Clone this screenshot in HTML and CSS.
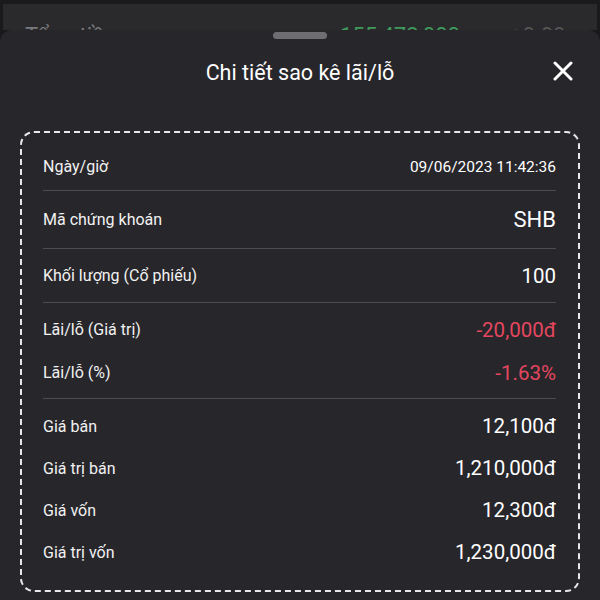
FILE: index.html
```html
<!DOCTYPE html>
<html>

<head>
    <meta charset="UTF-8">
    <meta name="viewport" content="width=device-width">
    <title>Chi tiết sao kê lãi/lỗ</title>
    <link rel="stylesheet" href="styles.css">
</head>

<body>
    <div class="backdrop">
        <div class="backdrop-row">
            <span class="bd-label">Tổng tiền</span>
            <span class="bd-value">155,472,000</span>
            <span class="bd-extra">+0.00</span>
        </div>
    </div>

    <section class="sheet">
        <div class="handle"></div>
        <header class="sheet-head">
            <h1>Chi tiết sao kê lãi/lỗ</h1>
            <button class="close" aria-label="Đóng">
                <svg width="20" height="20" viewBox="0 0 20 20">
                    <path d="M2 2L18 18M18 2L2 18" stroke="#fff" stroke-width="3" stroke-linecap="round" />
                </svg>
            </button>
        </header>

        <div class="card">
            <div class="group first">
                <div class="row">
                    <span class="label">Ngày/giờ</span>
                    <span class="value small">09/06/2023 11:42:36</span>
                </div>
            </div>
            <div class="group second">
                <div class="row">
                    <span class="label">Mã chứng khoán</span>
                    <span class="value big">SHB</span>
                </div>
            </div>
            <div class="group third">
                <div class="row">
                    <span class="label">Khối lượng (Cổ phiếu)</span>
                    <span class="value">100</span>
                </div>
            </div>
            <div class="group pnl">
                <div class="row">
                    <span class="label">Lãi/lỗ (Giá trị)</span>
                    <span class="value down">-20,000đ</span>
                </div>
                <div class="row">
                    <span class="label">Lãi/lỗ (%)</span>
                    <span class="value down">-1.63%</span>
                </div>
            </div>
            <div class="group prices">
                <div class="row">
                    <span class="label">Giá bán</span>
                    <span class="value">12,100đ</span>
                </div>
                <div class="row">
                    <span class="label">Giá trị bán</span>
                    <span class="value">1,210,000đ</span>
                </div>
                <div class="row">
                    <span class="label">Giá vốn</span>
                    <span class="value">12,300đ</span>
                </div>
                <div class="row">
                    <span class="label">Giá trị vốn</span>
                    <span class="value">1,230,000đ</span>
                </div>
            </div>
        </div>
    </section>
</body>

</html>
```

FILE: styles.css
```css
* {
    box-sizing: border-box;
}

body {
    margin: 0;
    height: 600px;
    overflow: hidden;
    background: #1a1a1c;
    font-family: Roboto, "Noto Sans", sans-serif;
    color: #fff;
}

/*********************/
/* L'écran derrière */
/*********************/
.backdrop {
    height: 30px;
    padding: 4px 3px 0 3px;
    overflow: hidden;
}

.backdrop-row {
    display: flex;
    align-items: flex-start;
    height: 26px;
    padding: 21px 0 0 22px;
    background: #2a2a2d;
    font-size: 22px;
    line-height: 1;
    color: #7a7a7e;
    overflow: hidden;
}

.bd-label {
    width: 315px;
}

.bd-value {
    color: #3f9a5c;
    width: 170px;
}

.bd-extra {
    color: #555;
}

/*********************/
/* La feuille */
/*********************/
.sheet {
    background: #27262b;
    height: 570px;
    border-radius: 12px 12px 0 0;
    padding-top: 2px;
}

.handle {
    width: 54px;
    height: 7px;
    margin: 0 auto;
    border-radius: 4px;
    background: #6e6e72;
}

.sheet-head {
    display: flex;
    align-items: center;
    justify-content: center;
    position: relative;
    height: 67px;
}

.sheet-head h1 {
    margin: 0;
    font-size: 21.5px;
    font-weight: 400;
}

.close {
    position: absolute;
    right: 27px;
    top: 22px;
    border: none;
    padding: 0;
    background: none;
    line-height: 0;
}

/*********************/
/* Le cadre pointillé */
/*********************/
.card {
    margin: 25px 20px 0 20px;
    border: 2px dashed #e8e8ea;
    border-radius: 14px;
    padding: 10px 22px 17px 21px;
}

.group {
    border-bottom: 1px solid #4d4c52;
}

.group:last-child {
    border-bottom: none;
}

.row {
    display: flex;
    align-items: center;
    justify-content: space-between;
}

.first .row {
    height: 47px;
}

.second .row {
    height: 57px;
}

.third .row {
    height: 53px;
}

.pnl {
    padding: 5px 0 4px 0;
}

.pnl .row {
    height: 43px;
}

.prices {
    padding-top: 6px;
}

.prices .row {
    height: 42px;
}

.label {
    font-size: 16px;
    color: #f2f2f2;
}

.value {
    font-size: 20.5px;
}

.value.small {
    font-size: 15.5px;
}

.value.big {
    font-size: 22px;
}

.down {
    color: #e4465f;
}
```
